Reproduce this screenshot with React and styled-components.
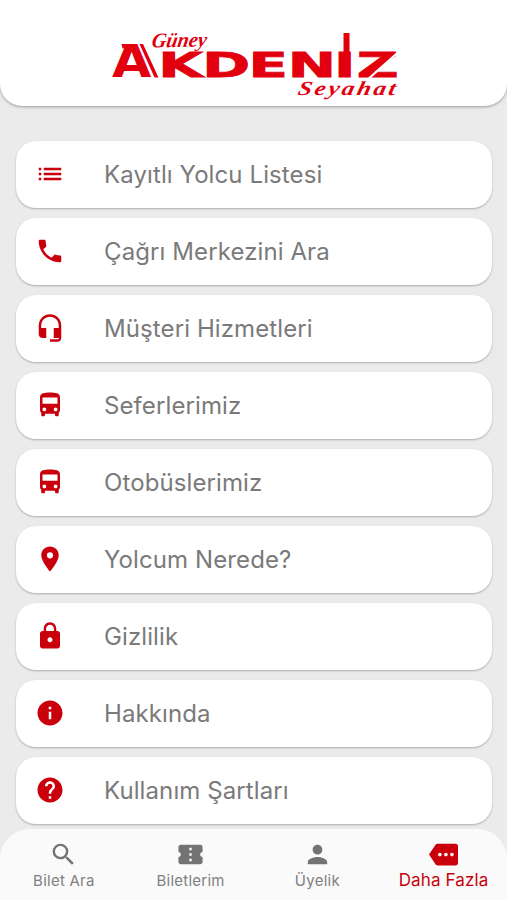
import React,{useState} from 'react';
import styled, {createGlobalStyle} from 'styled-components';
import {
    MdList, MdPhone, MdHeadsetMic, MdDirectionsBus, MdPlace, MdLock, MdInfo, MdHelp,
    MdSearch, MdConfirmationNumber, MdPerson, MdMore
} from 'react-icons/md';

const GlobalStyle = createGlobalStyle`
    body{
        margin:0;
        background:#ebebeb;
        font-family:Inter, Roboto, sans-serif;
    }
`;

const Page = styled.div`
    display:flex;
    flex-direction:column;
    height:900px;
    overflow:hidden;
`;

const Header = styled.header`
    flex:none;
    height:106px;
    box-sizing:border-box;
    background:#fff;
    border-radius:0 0 22px 22px;
    box-shadow:0 1px 3px rgba(0,0,0,0.35);
`;

const LogoSvg = styled.svg`
    display:block;
    fill:#e2000f;
`;

const WideText = styled.text`
    font-family:"DejaVu Sans", sans-serif;
    font-weight:700;
    font-size:${props => props.$size}px;
    stroke:#e2000f;
    stroke-width:${props => props.$stroke};
`;

const ScriptText = styled.text`
    font-family:"Liberation Serif", serif;
    font-style:italic;
    font-weight:700;
    font-size:${props => props.$size}px;
`;

const List = styled.main`
    flex:1;
    min-height:0;
    display:flex;
    flex-direction:column;
    gap:10px;
    padding:34.6px 15px 0 16px;
`;

const Row = styled.div`
    flex:none;
    display:flex;
    align-items:center;
    height:67px;
    box-sizing:border-box;
    padding-left:19px;
    background:#fff;
    border-radius:20px;
    box-shadow:0 1px 2px rgba(0,0,0,0.27);
    color:#c9000b;
    font-size:30px;
    cursor:pointer;
    svg{
        display:block;
    }
`;

const RowLabel = styled.span`
    margin-left:39px;
    font-size:24px;
    letter-spacing:0.1px;
    color:#7a7a7a;
    white-space:nowrap;
`;

const TabBar = styled.nav`
    flex:none;
    display:grid;
    grid-template-columns:repeat(4, 1fr);
    height:71px;
    position:relative;
    background:#fafafa;
    border-radius:30px 30px 0 0;
`;

const Tab = styled.div`
    display:flex;
    flex-direction:column;
    align-items:center;
    padding-top:11px;
    padding-left:${props => props.$active ? 0 : 1}px;
    color:${props => props.$active ? '#c9000b' : '#737373'};
    font-size:29px;
    cursor:pointer;
    svg{
        display:block;
    }
`;

const TabLabel = styled.span`
    margin-top:${props => props.$active ? 2 : 3}px;
    font-size:${props => props.$active ? 17 : 15}px;
    line-height:18px;
    letter-spacing:${props => props.$active ? 0.15 : 0.25}px;
    color:${props => props.$active ? '#c9000b' : '#808080'};
    white-space:nowrap;
`;

const rows = [
    {label:'Kayıtlı Yolcu Listesi', Icon:MdList},
    {label:'Çağrı Merkezini Ara', Icon:MdPhone},
    {label:'Müşteri Hizmetleri', Icon:MdHeadsetMic},
    {label:'Seferlerimiz', Icon:MdDirectionsBus},
    {label:'Otobüslerimiz', Icon:MdDirectionsBus},
    {label:'Yolcum Nerede?', Icon:MdPlace},
    {label:'Gizlilik', Icon:MdLock},
    {label:'Hakkında', Icon:MdInfo},
    {label:'Kullanım Şartları', Icon:MdHelp},
];

const tabs = [
    {label:'Bilet Ara', Icon:MdSearch},
    {label:'Biletlerim', Icon:MdConfirmationNumber},
    {label:'Üyelik', Icon:MdPerson},
    {label:'Daha Fazla', Icon:MdMore},
];

const Logo = () => (
    <LogoSvg width="507" height="106" viewBox="0 0 507 106">
        <WideText $size={45} $stroke={0} transform="translate(112 77.2) scale(1.13 1)">A</WideText>
        {/* serif on the left of the A, thin stripe along its right leg */}
        <path d="M121.500 44h12v4.500h-11z M139.500 44h3.500l15.500 33.500h-4z" />
        <WideText
            $size={33}
            $stroke={0.8}
            transform="translate(0 77.1) scale(1.75 1)"
            x="90.500 115.600 142 164.500 190.900 203.800"
            y="0"
        >KDENIZ</WideText>
        {/* tower over the I and the cut through the Z */}
        <rect x="343.500" y="33" width="6" height="20" />
        <path d="M366 81L399 51.500" stroke="#fff" strokeWidth="2.200" />
        <ScriptText $size={21} transform="translate(151 47.500) rotate(-1) skewX(-10)" textLength="55" lengthAdjust="spacingAndGlyphs">Güney</ScriptText>
        <ScriptText $size={20} transform="translate(297 94.500) scale(1.25 1) skewX(-10)" textLength="78">Seyahat</ScriptText>
    </LogoSvg>
);

const App = () =>{
    const [active, setActive] = useState(3);

    return(
        <>
            <GlobalStyle />
            <Page>
                <Header>
                    <Logo />
                </Header>
                <List>
                    {rows.map(({label, Icon}) => (
                        <Row key={label}>
                            <Icon />
                            <RowLabel>{label}</RowLabel>
                        </Row>
                    ))}
                </List>
                <TabBar>
                    {tabs.map(({label, Icon},idx) => (
                        <Tab key={label} $active={idx === active} onClick={()=>{ setActive(idx) }}>
                            <Icon />
                            <TabLabel $active={idx === active}>{label}</TabLabel>
                        </Tab>
                    ))}
                </TabBar>
            </Page>
        </>
    )
}

export default App;
